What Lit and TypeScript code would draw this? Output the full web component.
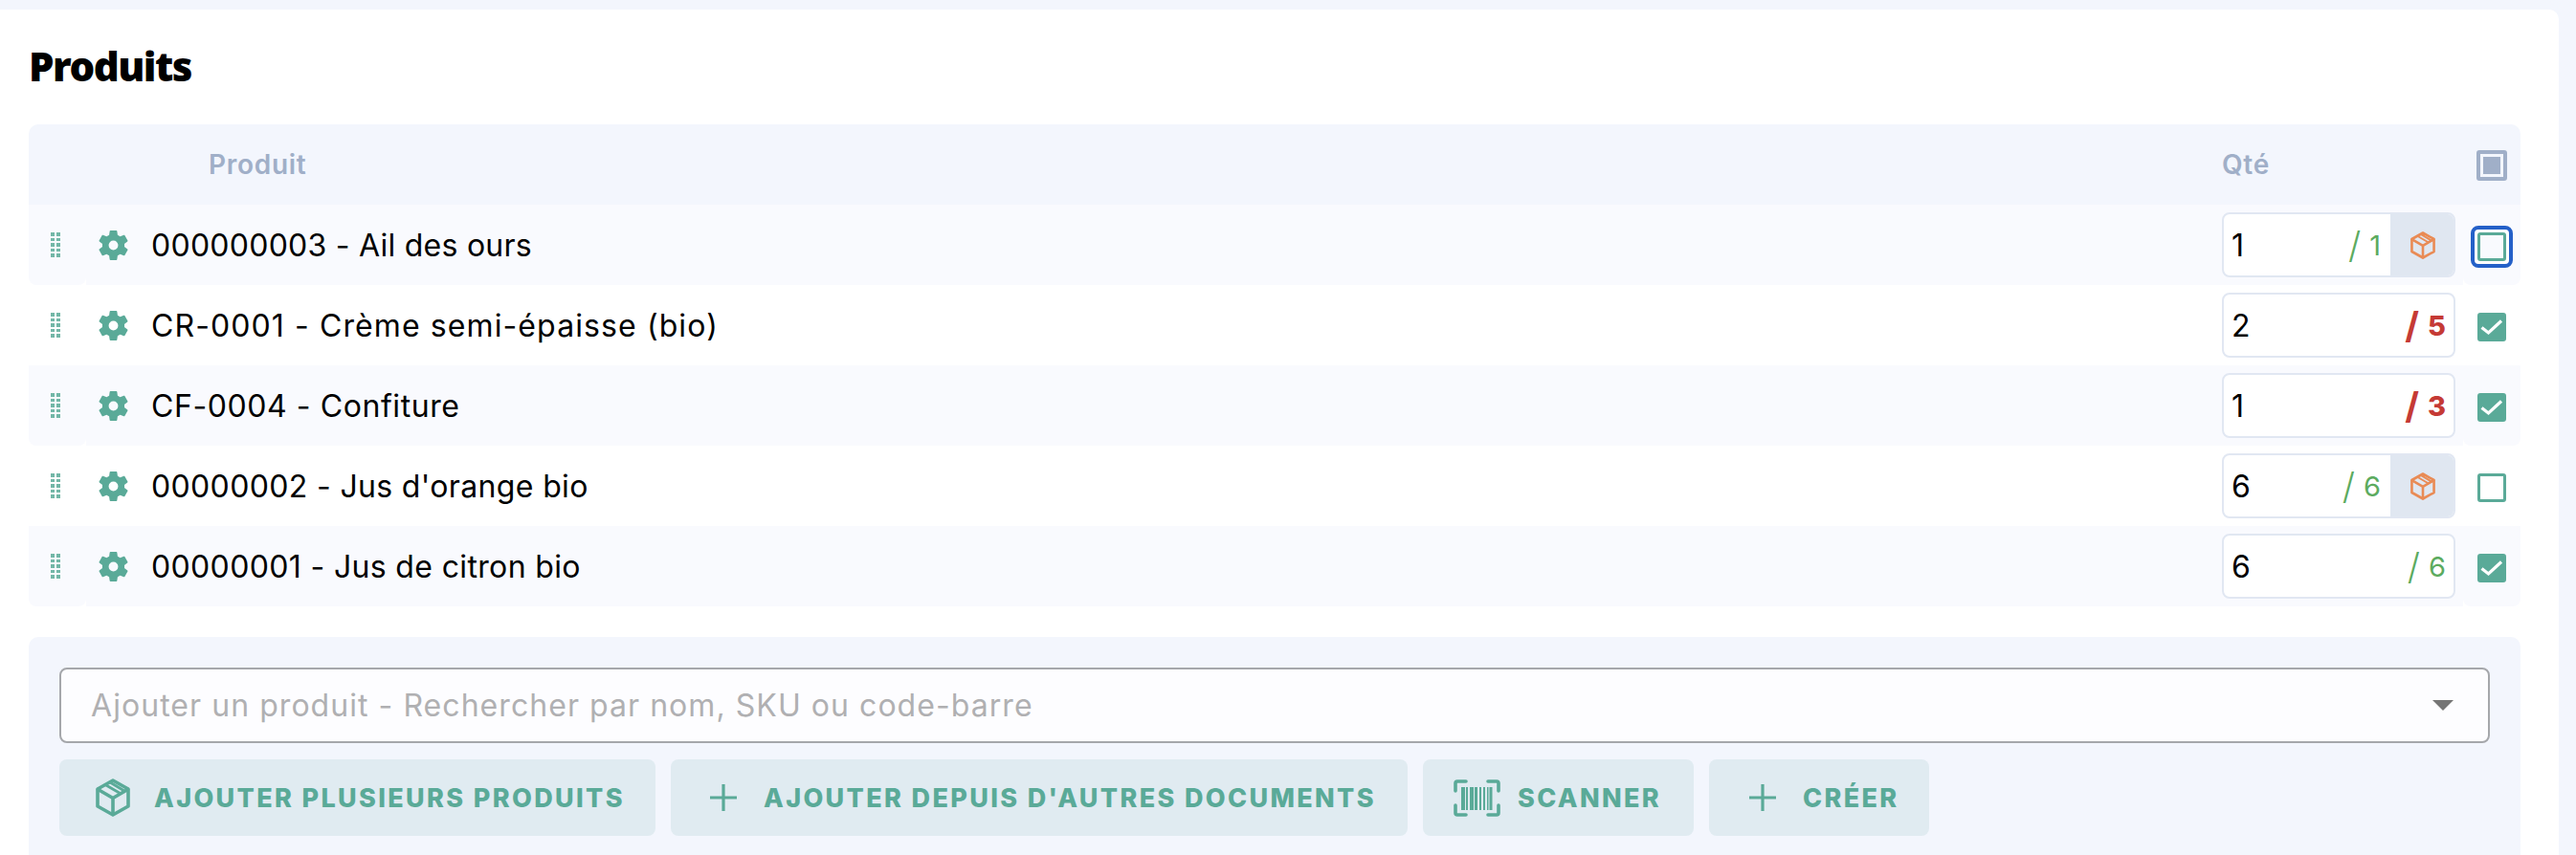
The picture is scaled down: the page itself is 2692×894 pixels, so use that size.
import { LitElement, html, css, svg } from "lit";
import { customElement } from "lit/decorators.js";

const cog = "M12,15.2A3.2,3.2 0 0,1 8.8,12A3.2,3.2 0 0,1 12,8.8A3.2,3.2 0 0,1 15.2,12A3.2,3.2 0 0,1 12,15.2M19.43,12.97C19.47,12.65 19.5,12.33 19.5,12C19.5,11.67 19.47,11.34 19.43,11L21.54,9.37C21.73,9.22 21.78,8.95 21.66,8.73L19.66,5.27C19.54,5.05 19.27,4.96 19.05,5.05L16.56,6.05C16.04,5.66 15.5,5.32 14.87,5.07L14.5,2.42C14.46,2.18 14.25,2 14,2H10C9.75,2 9.54,2.18 9.5,2.42L9.13,5.07C8.5,5.32 7.96,5.66 7.44,6.05L4.95,5.05C4.73,4.96 4.46,5.05 4.34,5.27L2.34,8.73C2.21,8.95 2.27,9.22 2.46,9.37L4.57,11C4.53,11.34 4.5,11.67 4.5,12C4.5,12.33 4.53,12.65 4.57,12.97L2.46,14.63C2.27,14.78 2.21,15.05 2.34,15.27L4.34,18.73C4.46,18.95 4.73,19.03 4.95,18.95L7.44,17.94C7.96,18.34 8.5,18.68 9.13,18.93L9.5,21.58C9.54,21.82 9.75,22 10,22H14C14.25,22 14.46,21.82 14.5,21.58L14.87,18.93C15.5,18.67 16.04,18.34 16.56,17.94L19.05,18.95C19.27,19.03 19.54,18.95 19.66,18.73L21.66,15.27C21.78,15.05 21.73,14.78 21.54,14.63L19.43,12.97Z";

const box = (cls: string) => html`<svg class=${cls} viewBox="0 0 36 40" fill="none" stroke="currentColor" stroke-width="3.6" stroke-linejoin="round" stroke-linecap="round">
  <path d="M18 2 L34 11 V29 L18 38 L2 29 V11 Z" />
  <path d="M2.5 11.5 L18 20.5 L33.5 11.5 M18 20.5 V37.5" />
  <path d="M10 6.5 L25.5 15.5 M15 4 L30 13" stroke-width="2.8" />
</svg>`;

const plus = html`<svg class="ic-plus" viewBox="0 0 28 28" fill="none" stroke="currentColor" stroke-width="3.2"><path d="M14 0 V28 M0 14 H28" /></svg>`;

const bars: [number, number][] = [[8,4],[13,2],[17,4],[22,3],[27,2],[31,2],[35,1.5],[37.5,3]];
const scan = html`<svg class="ic-scan" viewBox="0 0 49 39" fill="none">
  <path d="M13 2 H4 Q2 2 2 4 V12 M36 2 H45 Q47 2 47 4 V12 M13 37 H4 Q2 37 2 35 V27 M36 37 H45 Q47 37 47 35 V27" stroke="currentColor" stroke-width="3.6" stroke-linecap="round" />
  ${bars.map(([x, w]) => svg`<rect x=${x} y="8" width=${w} height="24" fill="currentColor" />`)}
</svg>`;

interface Row { name: string; fit: string; qty: string; total: string; state: "ok" | "over"; stock: boolean; check: "focus" | "on" | "off"; }

const rows: Row[] = [
  { name: "000000003 - Ail des ours", fit: "fit-a", qty: "1", total: "1", state: "ok", stock: true, check: "focus" },
  { name: "CR-0001 - Crème semi-épaisse (bio)", fit: "fit-b", qty: "2", total: "5", state: "over", stock: false, check: "on" },
  { name: "CF-0004 - Confiture", fit: "fit-c", qty: "1", total: "3", state: "over", stock: false, check: "on" },
  { name: "00000002 - Jus d'orange bio", fit: "fit-d", qty: "6", total: "6", state: "ok", stock: true, check: "off" },
  { name: "00000001 - Jus de citron bio", fit: "fit-d", qty: "6", total: "6", state: "ok", stock: false, check: "on" },
];

@customElement("app-root")
export class AppRoot extends LitElement {
  static styles = css`
    :host { display: block; width: 2692px; height: 894px; overflow: hidden; background: #f3f6fd; font-family: "Inter", "Liberation Sans", sans-serif; color: #000; }
    * { box-sizing: border-box; }
    .card { margin: 10px 18px 0 0; height: 884px; background: #fff; border-top-right-radius: 10px; padding: 0 40px 0 30px; }
    h2 { margin: 0; height: 120px; padding: 26px 0 0 0; font: 900 42px/66px "Noto Sans", sans-serif; letter-spacing: -1.5px; }
    .head { display: flex; height: 84px; background: #f3f6fd; border-radius: 10px 10px 0 0; align-items: center; color: #a0afc8; font-size: 28px; font-weight: 600; }
    .head .h-name { margin-left: 188px; flex: 1; letter-spacing: 0.7px; }
    .head .h-qty { width: 252px; letter-spacing: 0.7px; }
    .head .h-check { width: 60px; display: flex; justify-content: center; padding-top: 2px; }
    .master { width: 32px; height: 32px; border: 4px solid #a0afc8; border-radius: 3px; background: #f3f6fd; padding: 3px; }
    .master i { display: block; width: 18px; height: 18px; background: #a0afc8; }
    .row { display: flex; height: 84px; align-items: stretch; }
    .c-drag, .c-name, .c-qty, .c-check { display: flex; align-items: center; }
    .row.odd .c-drag, .row.odd .c-name, .row.odd .c-qty, .row.odd .c-check { background: #f9fafe; }
    .c-drag { width: 60px; padding-left: 23px; border-radius: 0 0 8px 8px; }
    .c-check { width: 60px; justify-content: center; border-radius: 0 0 8px 8px; padding-top: 4px; }
    .c-name { flex: 1; padding-left: 13px; font-size: 32px; font-weight: 400; }
    .fit-a { letter-spacing: 0.25px; }
    .fit-b { letter-spacing: 1.1px; }
    .fit-c { letter-spacing: 0.58px; }
    .fit-d { letter-spacing: 0.35px; }
    .c-name svg { width: 37px; height: 37px; margin-left: -3px; margin-right: 21px; flex: none; color: #5aaa98; fill: currentColor; }
    .c-qty { width: 252px; }
    .dots { display: grid; grid-template-columns: 4px 4px; gap: 2.2px 2px; }
    .dots i { display: block; height: 3.4px; background: #5aaa98; opacity: .85; }
    .qty { width: 244px; height: 68px; border: 2px solid #e1e7f2; border-radius: 8px; background: #fff; display: flex; align-items: stretch; overflow: hidden; }
    .val { flex: 1; display: flex; align-items: center; padding-left: 8px; font-size: 32px; }
    .val b { flex: 1; font-weight: 400; }
    .tot { display: flex; align-items: center; gap: 9px; padding-right: 8px; font-size: 29px; font-weight: 400; color: #5cab5f; }
    .tot .sl { font-size: 38px; font-weight: 300; line-height: 1; }
    .tot.over { color: #c53a35; font-weight: 800; }
    .tot.over .sl { font-weight: 700; }
    .qty.stock .tot { padding-right: 10px; }
    .stockbox { width: 68px; background: #e0e7f1; display: flex; align-items: center; justify-content: center; color: #e98b55; margin: -2px -2px -2px 0; }
    .ic-box-s { width: 26px; height: 29px; }
    .cb { width: 30px; height: 30px; border-radius: 3px; border: 3px solid #5aaa98; background: #fff; display: flex; }
    .cb.on { background: #5aaa98; }
    .cb svg { width: 24px; height: 24px; }
    .focus { width: 44px; height: 44px; border: 4px solid #2460c8; border-radius: 8px; background: #fff; display: flex; align-items: center; justify-content: center; }
    .focus .cb { background: #f9fafe; }
    .panel { margin-top: 32px; height: 228px; background: #f3f6fd; border-radius: 10px 10px 0 0; padding: 32px 32px 20px; }
    .select { height: 79px; border: 2px solid #a5a7ab; border-radius: 8px; background: #fdfdff; display: flex; align-items: center; padding: 0 36px 0 31px; color: #b0b0b2; font-size: 32px; font-weight: 400; letter-spacing: 1.05px; }
    .select span { flex: 1; }
    .arrow { width: 0; height: 0; border-left: 11px solid transparent; border-right: 11px solid transparent; border-top: 11px solid #757575; }
    .btns { display: flex; gap: 16px; margin-top: 17px; }
    .btn { height: 80px; border: 0; border-radius: 8px; background: #e0ebf1; color: #5aaa98; display: flex; align-items: center; font: 800 27px "Inter", sans-serif; text-transform: uppercase; padding: 0; letter-spacing: 2.35px; white-space: nowrap; }
    .b1 { width: 623px; padding-left: 38px; gap: 25px; }
    .b2 { width: 770px; padding-left: 41px; gap: 28px; }
    .b3 { width: 283px; padding-left: 32px; gap: 18px; }
    .b4 { width: 230px; padding-left: 42px; gap: 28px; }
    .ic-box { width: 36px; height: 40px; flex: none; }
    .ic-plus { width: 28px; height: 28px; flex: none; }
    .ic-scan { width: 49px; height: 39px; flex: none; }
  `;

  private checkbox(c: Row["check"]) {
    const tick = html`<svg viewBox="0 0 24 24" fill="none" stroke="#fff" stroke-width="3.2"><path d="M1.5 12.5 L8.5 18 L22 5.5" /></svg>`;
    if (c === "focus") return html`<div class="focus"><div class="cb"></div></div>`;
    return html`<div class="cb ${c === "on" ? "on" : ""}">${c === "on" ? tick : ""}</div>`;
  }

  render() {
    return html`<div class="card">
      <h2>Produits</h2>
      <div class="head">
        <div class="h-name">Produit</div>
        <div class="h-qty">Qté</div>
        <div class="h-check"><div class="master"><i></i></div></div>
      </div>
      ${rows.map((r, i) => html`<div class="row ${i % 2 === 0 ? "odd" : ""}">
        <div class="c-drag"><div class="dots">${Array.from({ length: 10 }, () => html`<i></i>`)}</div></div>
        <div class="c-name ${r.fit}"><svg viewBox="0 0 24 24"><path d=${cog} /></svg>${r.name}</div>
        <div class="c-qty"><div class="qty ${r.stock ? "stock" : ""}">
          <div class="val"><b>${r.qty}</b><div class="tot ${r.state === "over" ? "over" : ""}"><span class="sl">/</span><span>${r.total}</span></div></div>
          ${r.stock ? html`<div class="stockbox">${box("ic-box-s")}</div>` : ""}
        </div></div>
        <div class="c-check">${this.checkbox(r.check)}</div>
      </div>`)}
      <div class="panel">
        <div class="select"><span>Ajouter un produit - Rechercher par nom, SKU ou code-barre</span><div class="arrow"></div></div>
        <div class="btns">
          <button class="btn b1">${box("ic-box")}Ajouter plusieurs produits</button>
          <button class="btn b2">${plus}Ajouter depuis d'autres documents</button>
          <button class="btn b3">${scan}Scanner</button>
          <button class="btn b4">${plus}Créer</button>
        </div>
      </div>
    </div>`;
  }
}
